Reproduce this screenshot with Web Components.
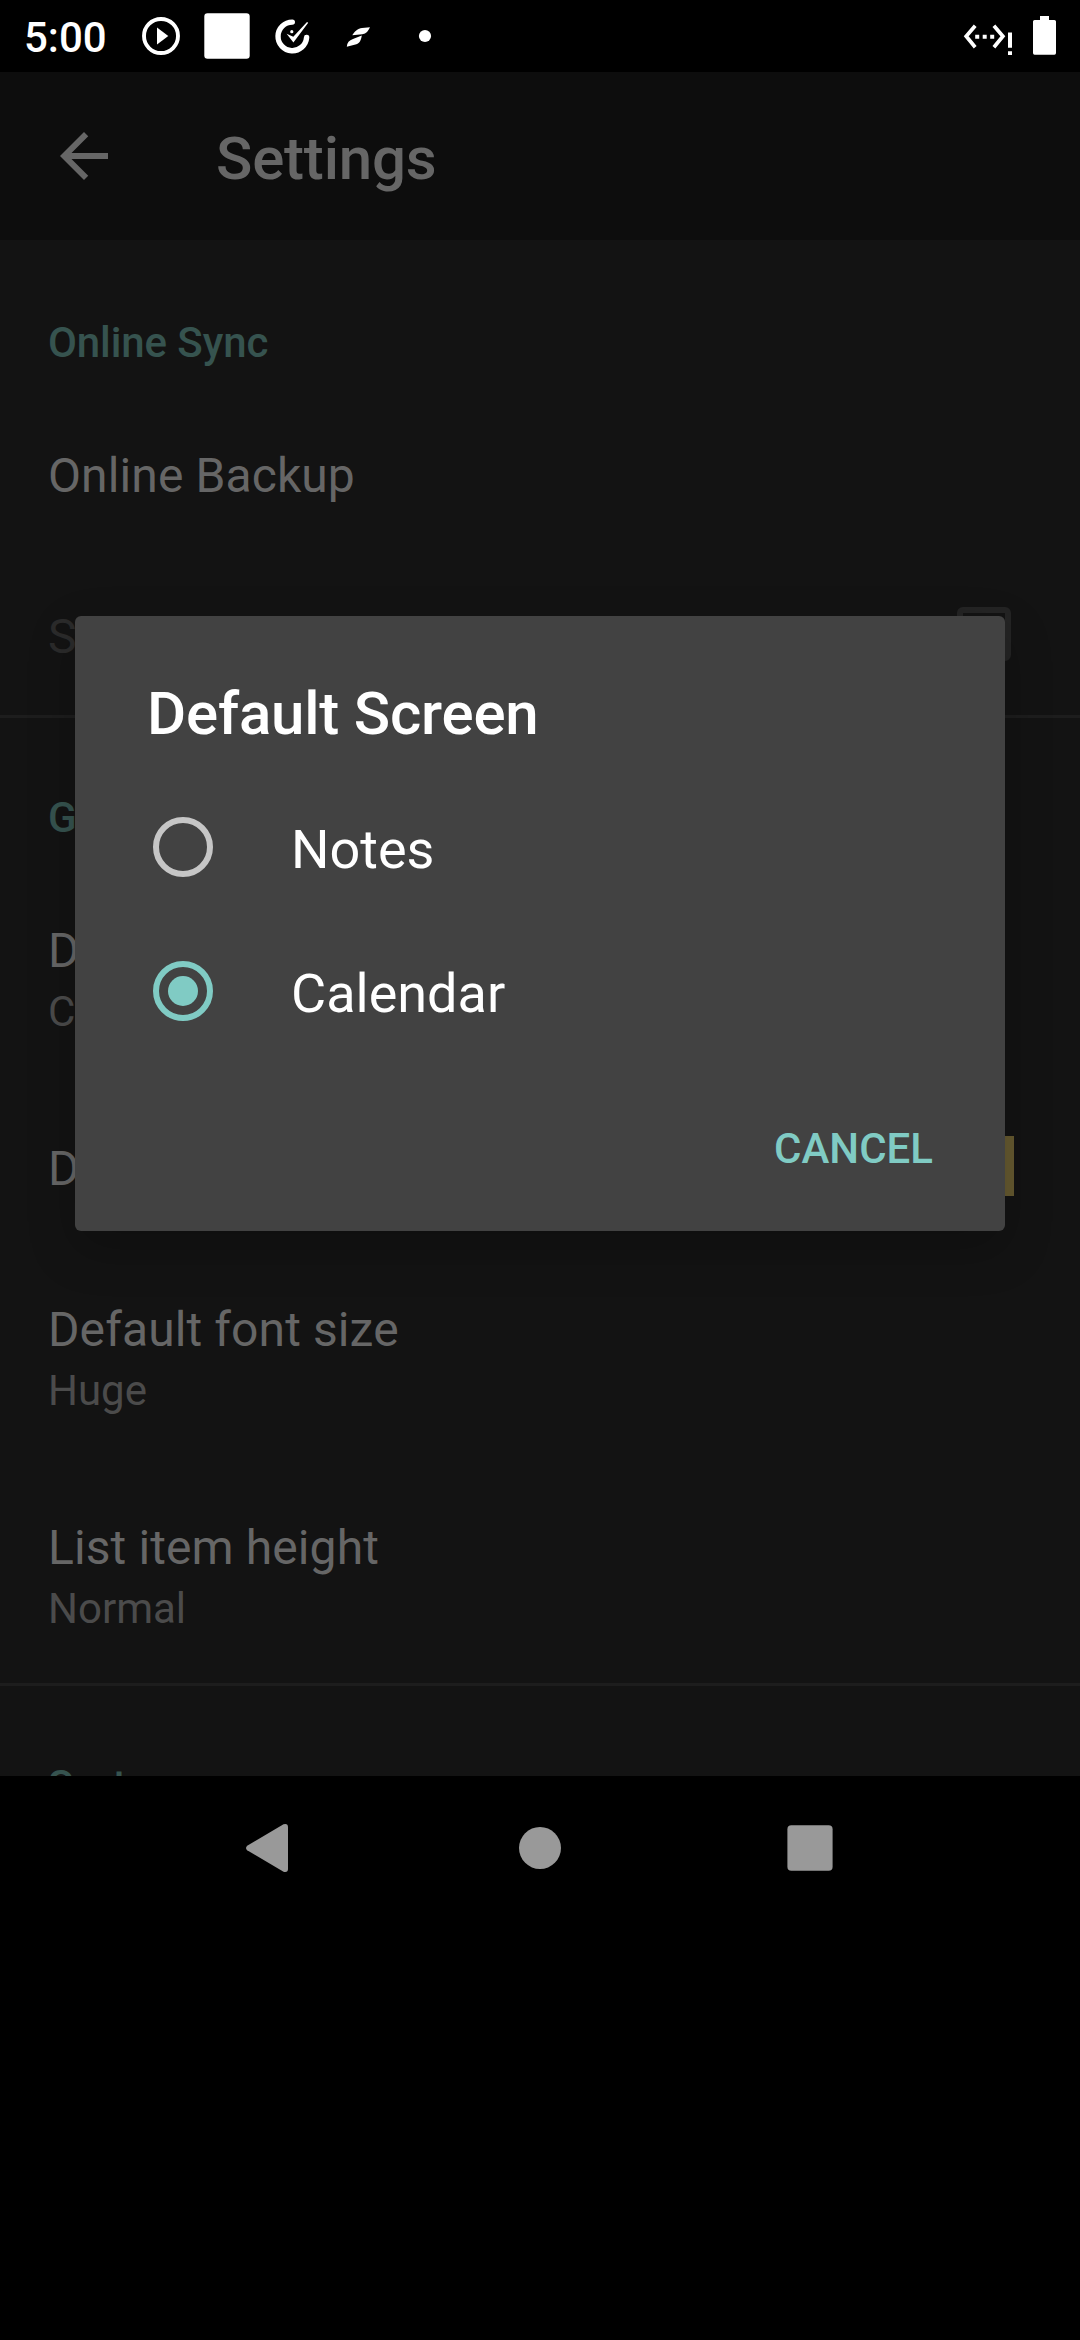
<!DOCTYPE html>
<html lang="en">
<head>
<meta charset="utf-8">
<title>Settings</title>
<style>
html,body{margin:0;background:#000}
body{width:1080px;height:2340px;overflow:hidden;font-family:Roboto,"Noto Sans",sans-serif}
</style>
</head>
<body>
<phone-screen>
  <status-bar time="5:00"></status-bar>
  <app-bar>Settings</app-bar>
  <settings-list>
    <pref-category>Online Sync</pref-category>
    <pref-item>Online Backup</pref-item>
    <pref-item disabled>Sync on launch<check-box slot="widget"></check-box></pref-item>
    <pref-category divided>General</pref-category>
    <pref-item>Default screen<span slot="summary">Calendar</span></pref-item>
    <pref-item>Default color<color-swatch slot="widget"></color-swatch></pref-item>
    <pref-item>Default font size<span slot="summary">Huge</span></pref-item>
    <pref-item>List item height<span slot="summary">Normal</span></pref-item>
    <pref-category divided>Sort</pref-category>
  </settings-list>
  <nav-bar></nav-bar>
  <choice-dialog slot="overlay" heading="Default Screen" action="CANCEL">
    <radio-option>Notes</radio-option>
    <radio-option checked>Calendar</radio-option>
  </choice-dialog>
</phone-screen>
<script>
const define = (name, render) => customElements.define(name, class extends HTMLElement {
  constructor() { super(); this.attachShadow({ mode: 'open' }); }
  connectedCallback() { this.shadowRoot.innerHTML = render(this); }
});

define('phone-screen', () => `
<style>
:host{display:flex;flex-direction:column;position:relative;width:1080px;height:2340px;background:#000;overflow:hidden}
</style><slot></slot><slot name="overlay"></slot>`);

define('status-bar', el => `
<style>
:host{display:flex;justify-content:space-between;height:72px;flex:none;background:#000;color:#fff}
.time{font-size:42px;font-weight:500;line-height:49px;padding:13px 0 0 24px;width:104px}
.side{display:flex}
svg{display:block;fill:#fff}
</style>
<div class="side"><div class="time">${el.getAttribute('time')}</div>
<svg width="320" height="72" viewBox="128 0 320 72">
  <circle cx="161" cy="36" r="17" fill="none" stroke="#fff" stroke-width="3.9"/>
  <path d="M157 27.6v16.8L168.3 36z"/>
  <rect x="204.3" y="13.2" width="45.4" height="45.5" rx="3.2"/>
  <path d="M292.3 22.1A14.300 14.300 0 1 0 306.600 37.500" fill="none" stroke="#fff" stroke-width="5.4" stroke-linecap="round"/>
  <path d="M286.6 33.8L293.3 36.8 307 22 308.200 22.800 293.400 42.600z"/>
  <circle cx="291.8" cy="31.7" r="1.6"/>
  <path d="M352.3 35.3C354 31.5 358 28.6 362 28L370 27.2C368.3 31 366.3 33.5 362.3 34.2z"/>
  <path d="M346.8 46.7C347 42.6 349.2 40.2 353 39L361.8 35.4C361 40 359.8 43 356.4 44.2z"/>
  <circle cx="425" cy="36" r="6.1"/>
</svg></div>
<svg width="130" height="72" viewBox="950 0 130 72">
  <path d="M975.2 25.7L966.2 36.3 975.2 47.2M993.9 25.7L1002.9 36.3 993.9 47.2" fill="none" stroke="#fff" stroke-width="3.7"/>
  <path d="M975.2 34.7h4v4h-4zM982.7 34.7h4v4h-4zM990.2 34.7h4v4h-4zM1008 32.6h4v15.2h-4zM1008 51.3h4v3.6h-4z"/>
  <path d="M1040 16h9v4h5.4q1.6 0 1.6 1.6V53q0 1.7-1.6 1.7h-19.8q-1.6 0-1.6-1.7V21.600q0-1.600 1.600-1.600h5.400z"/>
</svg>`);

define('app-bar', () => `
<style>
:host{display:flex;height:168px;flex:none;background:#0d0d0d;color:#666}
svg{display:block;margin:48px 0 0 48px}
.title{font-size:60px;font-weight:500;letter-spacing:-.2px;line-height:71px;padding:51px 0 0 96px}
</style>
<svg width="72" height="72" viewBox="0 0 24 24"><path fill="#666" d="M20 11H7.830l5.590-5.590L12 4l-8 8 8 8 1.410-1.410L7.830 13H20z"/></svg>
<div class="title"><slot></slot></div>`);

define('settings-list', () => `
<style>:host{display:flex;flex-direction:column;height:1536px;flex:none;overflow:hidden;background:#131313}</style><slot></slot>`);

define('pref-category', () => `
<style>
:host{display:block;box-sizing:border-box;height:153px;flex:none;padding:75px 48px 0;border-top:3px solid transparent;font-size:42px;font-weight:500;letter-spacing:-.1px;line-height:49px;color:#36534f}
:host([divided]){border-top-color:#1d1d1d}
</style><slot></slot>`);

define('pref-item', el => `
<style>
:host{display:flex;justify-content:space-between;flex:none;box-sizing:border-box;height:${el.querySelector('[slot=summary]') ? 218 : 161}px;padding:0 66px 0 48px}
.text{display:flex;flex-direction:column;padding-top:54px;gap:8px;white-space:nowrap}
.title{font-size:48px;letter-spacing:.1px;line-height:57px;color:#666}
.summary{font-size:42px;line-height:49px;color:#4b4b4b}
:host([disabled]) .title{color:#2b2b2b}
.widget{display:flex;align-items:center;height:160px}
</style>
<div class="text"><div class="title"><slot></slot></div><div class="summary"><slot name="summary"></slot></div></div>
<div class="widget"><slot name="widget"></slot></div>`);

define('check-box', () => `
<style>:host{display:block;box-sizing:border-box;width:54px;height:54px;margin-right:3px;border:6px solid #242424;border-radius:6px}</style>`);

define('color-swatch', () => `
<style>:host{display:block;width:60px;height:60px;background:#665a30}</style>`);

define('choice-dialog', el => `
<style>
:host{position:absolute;left:75px;top:616px;width:930px;height:615px;box-sizing:border-box;display:flex;flex-direction:column;background:#424242;border-radius:6px;box-shadow:0 18px 48px rgba(0,0,0,.22);color:#fff}
.head{font-size:60px;font-weight:500;letter-spacing:-.2px;line-height:71px;padding:62px 72px 0;height:97px}
.foot{display:flex;justify-content:flex-end;padding:61px 72px 0;font-size:42px;font-weight:500;line-height:49px;color:#80cbc4}
</style>
<div class="head">${el.getAttribute('heading')}</div>
<slot></slot>
<div class="foot"><span>${el.getAttribute('action')}</span></div>`);

define('radio-option', el => {
  const on = el.hasAttribute('checked'), c = on ? '#80cbc4' : '#c6c6c6';
  return `
<style>
:host{display:flex;height:144px;flex:none;padding-left:72px}
svg{display:block;margin-top:36px}
.label{font-size:54px;line-height:63px;padding:43px 0 0 72px}
</style>
<svg width="72" height="72" viewBox="0 0 24 24"><circle cx="12" cy="12" r="9" fill="none" stroke="${c}" stroke-width="2"/>${on ? `<circle cx="12" cy="12" r="5" fill="${c}"/>` : ''}</svg>
<div class="label"><slot></slot></div>`;
});

define('nav-bar', () => `
<style>
:host{display:flex;justify-content:space-between;align-items:center;height:144px;flex:none;box-sizing:border-box;padding:0 135px;background:#000}
div{width:270px;display:flex;justify-content:center}
svg{display:block;fill:#999}
</style>
<div><svg width="60" height="60" viewBox="0 0 60 60"><path d="M7.200 27.700L43.500 6.300Q48 5 48 9.300v41.400Q48 55 43.500 53.700L7.200 32.300Q4.800 30 7.200 27.700z"/></svg></div>
<div><svg width="60" height="60" viewBox="0 0 60 60"><circle cx="30" cy="30" r="21"/></svg></div>
<div><svg width="60" height="60" viewBox="0 0 60 60"><rect x="7.400" y="7.300" width="45.200" height="45.400" rx="4"/></svg></div>`);
</script>
</body>
</html>
